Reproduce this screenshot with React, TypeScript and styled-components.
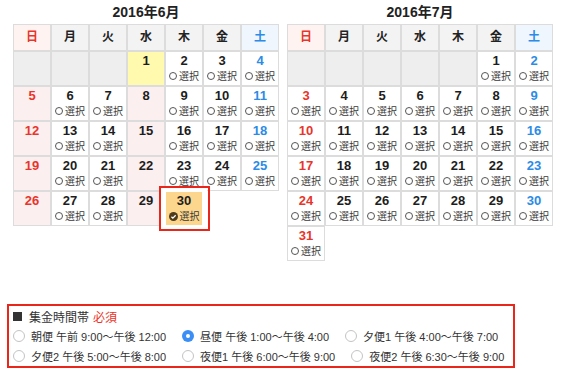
import styled, { createGlobalStyle, css } from "styled-components";

const RED = "#e8352b";
const BLUE = "#2b8be6";

type Kind = "blank" | "none" | "open" | "closed" | "today" | "selected";

interface Month {
  title: string;
  offset: number;
  days: number;
  kindOf: (day: number, weekday: number) => Kind;
}

const WEEKDAYS = ["日", "月", "火", "水", "木", "金", "土"];

const months: Month[] = [
  {
    title: "2016年6月",
    offset: 3,
    days: 30,
    kindOf: (d, wd) => {
      if (d === 1) return "today";
      if (d === 30) return "selected";
      if (wd === 0 || wd === 3) return "closed";
      return "open";
    },
  },
  {
    title: "2016年7月",
    offset: 5,
    days: 31,
    kindOf: () => "open",
  },
];

const slots = [
  [
    { label: "朝便 午前 9:00〜午後 12:00", on: false },
    { label: "昼便 午後 1:00〜午後 4:00", on: true },
    { label: "夕便1 午後 4:00〜午後 7:00", on: false },
  ],
  [
    { label: "夕便2 午後 5:00〜午後 8:00", on: false },
    { label: "夜便1 午後 6:00〜午後 9:00", on: false },
    { label: "夜便2 午後 6:30〜午後 9:00", on: false },
  ],
];

const GlobalStyle = createGlobalStyle`
  body {
    margin: 0;
    background: #fff;
    color: #222;
    font-family: "Liberation Sans", "Noto Sans CJK JP", sans-serif;
  }
`;

const Page = styled.div`
  width: 564px;
`;

const Calendars = styled.div`
  display: flex;
  align-items: flex-start;
  gap: 8px;
  padding-left: 13px;
`;

const MonthBlock = styled.div`
  width: 266px;
`;

const Title = styled.div`
  height: 24px;
  line-height: 24px;
  text-align: center;
  font-size: 14px;
  font-weight: bold;
  color: #222;
`;

const Grid = styled.div`
  display: grid;
  grid-template-columns: repeat(7, 38px);
  grid-template-rows: 27px;
  grid-auto-rows: 35px;
`;

const headBg = (wd: number) => (wd === 0 ? "#fff3f1" : wd === 6 ? "#eff6fd" : "#f3f3f3");
const dayColor = (wd: number) => (wd === 0 ? RED : wd === 6 ? BLUE : "#1d1d1d");

const HeadCell = styled.div<{ $wd: number }>`
  box-sizing: border-box;
  border: 1px solid #dcdcdc;
  background: ${(p) => headBg(p.$wd)};
  color: ${(p) => (p.$wd === 0 ? RED : p.$wd === 6 ? BLUE : "#222")};
  font-size: 12px;
  font-weight: bold;
  line-height: 25px;
  text-align: center;
`;

const cellBg: Record<Kind, string> = {
  blank: "#eeeeee",
  none: "transparent",
  open: "#ffffff",
  closed: "#fcefef",
  today: "#fffaae",
  selected: "#fcd68d",
};

const Cell = styled.div<{ $kind: Kind }>`
  position: relative;
  box-sizing: border-box;
  border: 1px solid ${(p) => (p.$kind === "none" ? "transparent" : "#dcdcdc")};
  background: ${(p) => cellBg[p.$kind]};
  display: flex;
  flex-direction: column;
  align-items: center;
  padding-top: 2px;
  ${(p) =>
    p.$kind === "selected" &&
    css`
      z-index: 1;
      border-color: #fff;
      box-shadow: 0 0 0 4px #fff;
      &::before {
        content: "";
        position: absolute;
        top: -6px;
        bottom: -6px;
        left: -7px;
        right: -8px;
        border: 2px solid #e8261a;
        pointer-events: none;
      }
    `}
`;

const DayNum = styled.div<{ $wd: number }>`
  font-size: 13px;
  font-weight: bold;
  line-height: 14px;
  color: ${(p) => dayColor(p.$wd)};
`;

const Pick = styled.div`
  display: flex;
  align-items: center;
  gap: 2px;
  margin-top: 2px;
  font-size: 10px;
  line-height: 12px;
  color: #3a3a3a;
  font-family: "Noto Sans CJK JP", sans-serif;
`;

const PickRing = styled.span`
  box-sizing: border-box;
  width: 8px;
  height: 8px;
  border: 1.2px solid #555;
  border-radius: 50%;
`;

const TimeBox = styled.div`
  box-sizing: border-box;
  width: 508px;
  height: 64px;
  margin: 43px 0 0 7px;
  padding: 0 4px;
  border: 2px solid #e8261a;
  font-family: "Liberation Sans", "Noto Sans CJK JP", sans-serif;
  color: #333;
`;

const Heading = styled.div`
  display: flex;
  align-items: center;
  height: 20px;
  font-size: 12px;
`;

const Square = styled.span`
  width: 9px;
  height: 9px;
  margin-right: 7px;
  background: #333;
`;

const Required = styled.span`
  margin-left: 4px;
  color: ${RED};
`;

const OptionRow = styled.div`
  display: flex;
  align-items: center;
  gap: 16px;
  height: 20px;
  font-size: 11px;
`;

const Option = styled.label`
  display: flex;
  align-items: center;
  white-space: nowrap;
`;

const Radio = styled.span<{ $on: boolean }>`
  box-sizing: border-box;
  width: 12px;
  height: 12px;
  margin-right: 6px;
  border-radius: 50%;
  display: flex;
  align-items: center;
  justify-content: center;
  ${(p) =>
    p.$on
      ? css`
          background: #3a8ef6;
          &::after {
            content: "";
            width: 4px;
            height: 4px;
            border-radius: 50%;
            background: #fff;
          }
        `
      : css`
          background: #fff;
          border: 1px solid #c4c4c4;
        `}
`;

function CheckMark() {
  return (
    <svg width="9" height="9" viewBox="0 0 10 10">
      <circle cx="5" cy="5" r="5" fill="#4e3b1c" />
      <path d="M2.7 5.2 L4.3 6.8 L7.4 3.6" stroke="#fff" strokeWidth="1.4" fill="none" />
    </svg>
  );
}

function MonthCalendar({ month }: { month: Month }) {
  const total = Math.ceil((month.offset + month.days) / 7) * 7;
  const cells = Array.from({ length: total }, (_, i) => {
    const day = i - month.offset + 1;
    const wd = i % 7;
    if (day < 1) return <Cell key={i} $kind="blank" />;
    if (day > month.days) return <Cell key={i} $kind="none" />;
    const kind = month.kindOf(day, wd);
    return (
      <Cell key={i} $kind={kind}>
        <DayNum $wd={wd}>{day}</DayNum>
        {(kind === "open" || kind === "selected") && (
          <Pick>
            {kind === "selected" ? <CheckMark /> : <PickRing />}
            選択
          </Pick>
        )}
      </Cell>
    );
  });

  return (
    <MonthBlock>
      <Title>{month.title}</Title>
      <Grid>
        {WEEKDAYS.map((w, i) => (
          <HeadCell key={w} $wd={i}>
            {w}
          </HeadCell>
        ))}
        {cells}
      </Grid>
    </MonthBlock>
  );
}

export default function App() {
  return (
    <Page>
      <GlobalStyle />
      <Calendars>
        {months.map((m) => (
          <MonthCalendar key={m.title} month={m} />
        ))}
      </Calendars>
      <TimeBox>
        <Heading>
          <Square />
          集金時間帯
          <Required>必須</Required>
        </Heading>
        {slots.map((row, r) => (
          <OptionRow key={r}>
            {row.map((s) => (
              <Option key={s.label}>
                <Radio $on={s.on} />
                {s.label}
              </Option>
            ))}
          </OptionRow>
        ))}
      </TimeBox>
    </Page>
  );
}
